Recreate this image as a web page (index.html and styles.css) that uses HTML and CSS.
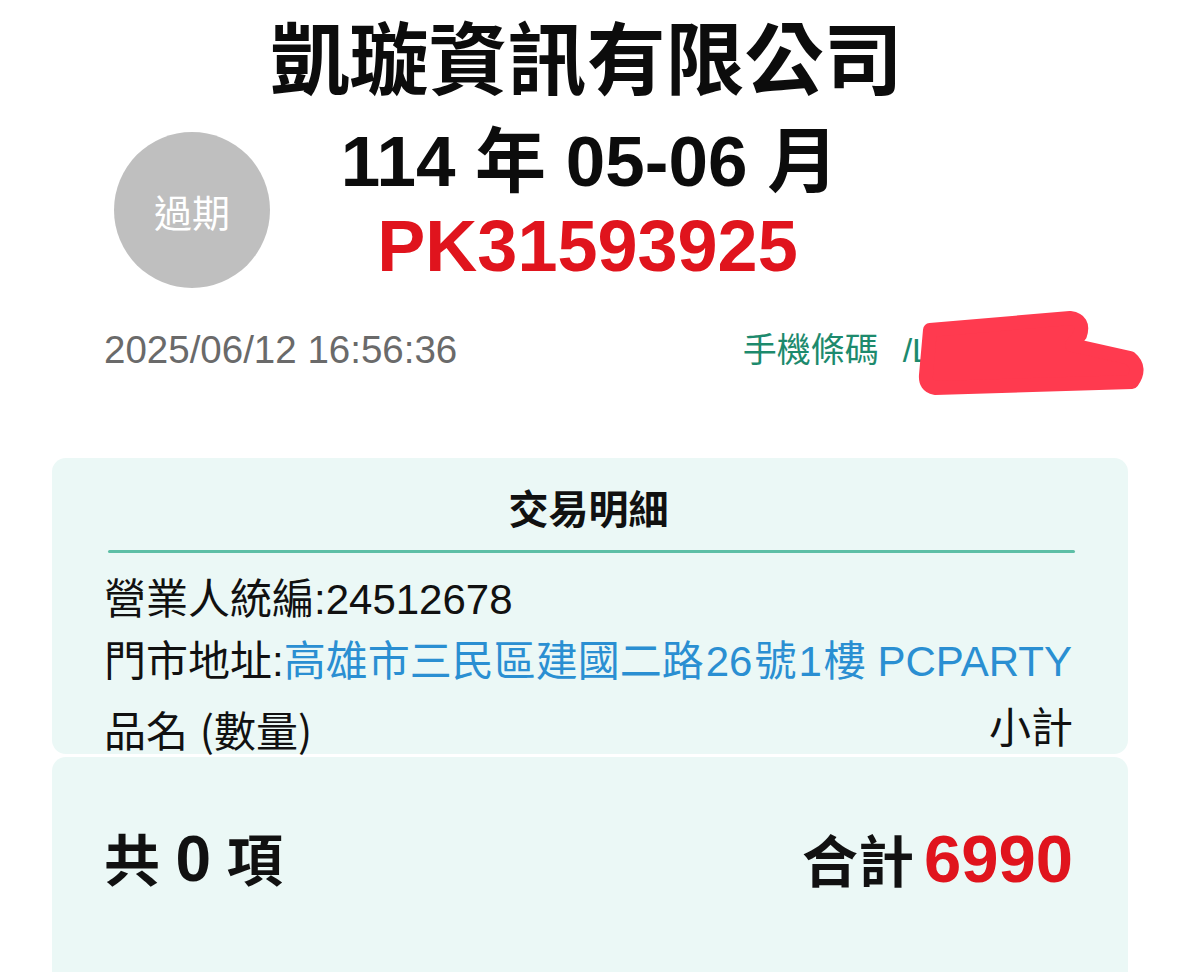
FILE: index.html
```html
<!DOCTYPE html>
<html lang="zh-Hant">
<head>
<meta charset="utf-8">
<title>電子發票</title>
<link rel="stylesheet" href="styles.css">
</head>
<body>
<div class="page">
  <header class="head">
    <div class="company">凱璇資訊有限公司</div>
    <div class="badge">過期</div>
    <div class="period">114 年 05-06 月</div>
    <div class="number">PK31593925</div>
  </header>

  <div class="info">
    <span class="time">2025/06/12 16:56:36</span>
    <span class="carrier">手機條碼<span class="slash">/L</span></span>
    <svg class="redact" width="260" height="110" viewBox="0 0 260 110">
      <path d="M30,30 L170,18 Q185,20 180,35 L172,45 L230,58 Q242,68 232,82 L35,88 Q25,86 26,75 Z" fill="#ff3a4f" stroke="#ff3a4f" stroke-width="14" stroke-linejoin="round"/>
    </svg>
  </div>

  <section class="card card-top">
    <h2 class="card-title">交易明細</h2>
    <div class="rule"></div>
    <div class="row row-first">營業人統編:24512678</div>
    <div class="row">門市地址:<span class="addr">高雄市三民區建國二路<span class="gap">26</span>號<span class="gap">1</span>樓 PCPARTY</span></div>
    <div class="row row-head"><span>品名 <span class="paren">(</span>數量<span class="paren">)</span></span><span>小計</span></div>
  </section>

  <section class="card card-bottom">
    <div class="totals">
      <span>共 <span class="num">0</span> 項</span>
      <span>合計<span class="num red sum">6990</span></span>
    </div>
  </section>
</div>
</body>
</html>
```

FILE: styles.css
```css
html, body {
  margin: 0;
  padding: 0;
  background: #ffffff;
}

body {
  font-family: "Liberation Sans", "Noto Sans CJK TC", sans-serif;
  color: #111;
  overflow: hidden;
}

.page {
  width: 1179px;
  height: 972px;
  overflow: hidden;
}

.head {
  display: grid;
  grid-template-columns: 1fr;
  padding-top: 12px;
  position: relative;
}

.company {
  text-align: center;
  font-size: 79px;
  font-weight: 700;
  line-height: 100px;
  color: #0c0c0c;
  padding-right: 6px;
}

.badge {
  position: absolute;
  left: 114px;
  top: 132px;
  width: 156px;
  height: 156px;
  border-radius: 50%;
  background: #bfbfbf;
  color: #fff;
  font-family: "Noto Sans CJK TC", sans-serif;
  font-size: 38px;
  display: flex;
  align-items: center;
  justify-content: center;
}

.period {
  text-align: center;
  font-size: 71px;
  font-weight: 700;
  line-height: 100px;
  color: #0c0c0c;
}

.number {
  text-align: center;
  font-size: 72px;
  font-weight: 700;
  line-height: 68px;
  color: #e0141d;
  padding-right: 4px;
}

.info {
  position: relative;
  margin-top: 50px;
  height: 40px;
  line-height: 40px;
  display: flex;
  align-items: center;
  padding-left: 104px;
}

.time {
  font-size: 38.5px;
  color: #6a6a6a;
}

.carrier {
  margin-left: auto;
  margin-right: 248px;
  font-size: 34px;
  color: #1d8a6d;
}

.slash {
  margin-left: 24px;
}

.redact {
  position: absolute;
  left: 900px;
  top: -30px;
}

.card {
  margin: 0 51px 0 52px;
  background: #ebf8f6;
  padding: 0 55px 0 52px;
  box-sizing: border-box;
}

.card-top {
  margin-top: 88px;
  border-radius: 14px;
  padding-top: 28px;
  height: 296px;
}

.card-title {
  margin: 0;
  text-align: center;
  font-size: 40px;
  font-weight: 700;
  line-height: 48px;
  color: #111;
}

.rule {
  margin: 16px -2px 0 4px;
  height: 3px;
  background: #5dbfa6;
  border-radius: 2px;
}

.row {
  font-size: 42px;
  line-height: 62px;
  color: #111;
  white-space: nowrap;
}

.row-first {
  margin-top: 16px;
}

.addr {
  color: #2a8fd2;
}

.gap {
  margin: 0 2px;
}

.row-head {
  display: flex;
  justify-content: space-between;
  margin-top: 6px;
  line-height: 60px;
}

.paren {
  font-family: "Noto Sans CJK TC", sans-serif;
}

.card-bottom {
  margin-top: 3px;
  border-radius: 14px;
  padding-top: 72px;
  height: 300px;
}

.totals {
  display: flex;
  justify-content: space-between;
  font-size: 56px;
  font-weight: 700;
  line-height: 60px;
  color: #111;
}

.num {
  font-size: 64px;
}

.sum {
  margin-left: 10px;
  font-size: 67px;
}

.red {
  color: #e0141d;
}
```
